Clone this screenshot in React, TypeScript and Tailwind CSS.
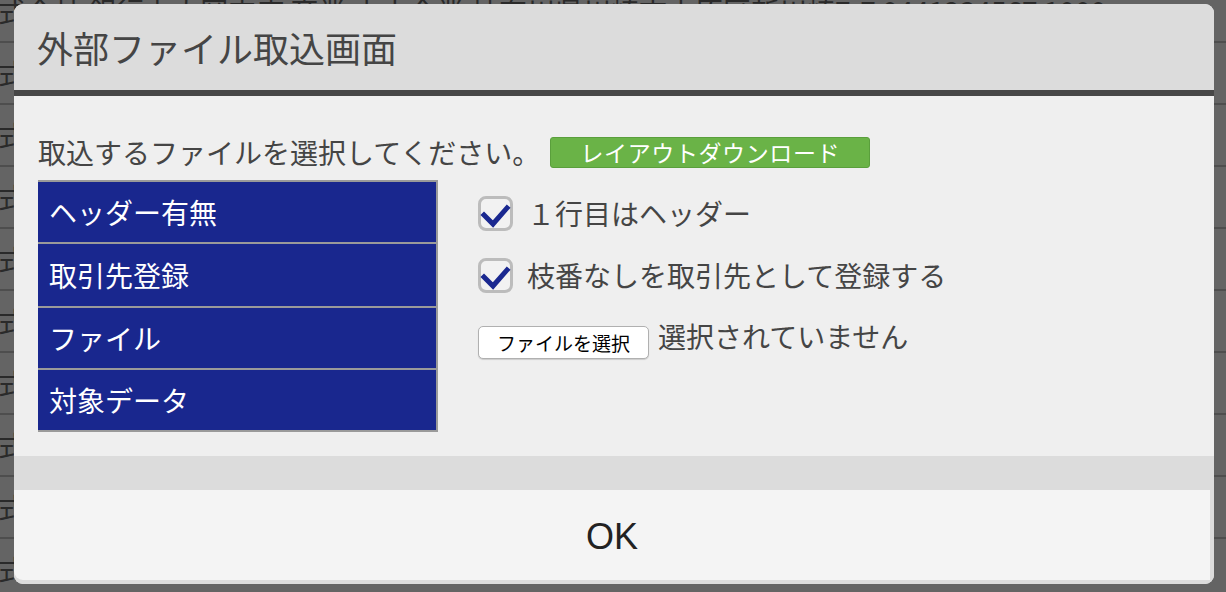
import React from "react";

const jp = { fontFamily: '"Noto Sans CJK JP", "Noto Sans", sans-serif' };

const bgRows = [
  "式会社 銀行上大岡支店 商業 中小企業 神奈川県川崎市中原区新川崎7-7 0441234567 1000",
  "式会社 ",
  "式会社 ",
  "式会社 ",
  "式会社 ",
  "式会社 ",
  "式会社 ",
  "式会社 ",
  "式会社 ",
  "式会社 ",
];

function Check() {
  return (
    <div className="w-[35px] h-[35px] shrink-0 rounded-[8px] border-[3px] border-[#bcbcbc] bg-[#f2f2f2] flex items-center justify-center">
      <svg width="35" height="35" viewBox="0 0 35 35" className="-m-[3px]">
        <polyline
          points="6,19 15,28 29,12"
          fill="none"
          stroke="#1a2890"
          strokeWidth="5"
          strokeLinecap="square"
          strokeLinejoin="miter"
        />
      </svg>
    </div>
  );
}

export default function App() {
  const rows = [
    { t: "ヘッダー有無", h: "h-[62px] border-b-2" },
    { t: "取引先登録", h: "h-[64px] border-b-2" },
    { t: "ファイル", h: "h-[62px] border-b-2" },
    { t: "対象データ", h: "h-[60px]" },
  ];
  return (
    <div className="relative w-[1226px] h-[592px] overflow-hidden bg-[#646464]" style={jp}>
      {/* faded background table */}
      <div className="-mt-[19px] flex flex-col">
        {bgRows.map((t, i) => (
          <div
            key={i}
            className="h-[62px] border-b-2 border-[#4e4e4e] flex items-center text-[28px] text-[#2a2a2a] whitespace-nowrap -ml-[2px]"
          >
            {t}
          </div>
        ))}
      </div>

      {/* modal */}
      <div className="absolute left-[14px] top-[4px] w-[1200px] h-[580px] rounded-[9px] overflow-hidden flex flex-col bg-[#efefef]">
        <div className="h-[86px] shrink-0 bg-[#dcdcdc] flex items-center pl-[23px]">
          <span className="text-[36px] leading-none text-[#454545]">外部ファイル取込画面</span>
        </div>
        <div className="h-[6px] shrink-0 bg-[#474747]" />
        <div className="h-[360px] shrink-0 bg-[#efefef] pl-[24px] pt-[40px]">
          <div className="h-[32px] flex items-center">
            <span className="text-[28px] leading-none text-[#454545]">取込するファイルを選択してください。</span>
            <div className="ml-[10px] w-[320px] h-[31px] rounded-[3px] bg-[#6ab347] border border-[#5a9f3c] flex items-center justify-center">
              <span className="text-[23px] tracking-[0.6px] leading-none text-white">レイアウトダウンロード</span>
            </div>
          </div>
          <div className="mt-[12px] flex">
            <div className="w-[400px] border-t-2 border-r-2 border-b-2 border-[#9a9a9a] bg-[#19278e] flex flex-col">
              {rows.map((r) => (
                <div
                  key={r.t}
                  className={`${r.h} border-[#9a9a9a] flex items-center pl-[11px] text-[28px] leading-none text-white`}
                >
                  {r.t}
                </div>
              ))}
            </div>
            <div className="ml-[40px] pt-[2px] flex flex-col">
              <div className="h-[62px] flex items-center">
                <Check />
                <span className="ml-[14px] text-[28px] leading-none text-[#454545]">１行目はヘッダー</span>
              </div>
              <div className="h-[62px] flex items-center">
                <Check />
                <span className="ml-[14px] text-[28px] leading-none text-[#454545]">枝番なしを取引先として登録する</span>
              </div>
              <div className="h-[64px] flex items-center">
                <div className="flex items-end">
                  <div className="w-[171px] h-[33px] mt-[8px] rounded-[5px] border border-[#b0b0b0] bg-white flex items-center justify-center shadow-[0_1px_1px_rgba(0,0,0,0.15)]">
                    <span className="text-[19px] leading-none text-black">ファイルを選択</span>
                  </div>
                  <span className="ml-[9px] mb-[9px] text-[28px] leading-none text-[#454545]">選択されていません</span>
                </div>
              </div>
            </div>
          </div>
        </div>
        <div className="h-[34px] shrink-0 bg-[#dcdcdc]" />
        <div className="flex-1 bg-[#dcdcdc]">
          <div className="h-[90px] mr-[4px] bg-[#f4f4f4] rounded-bl-[9px] flex items-center justify-center">
            <span className="text-[36px] leading-none text-[#222] mt-[4px]" style={{ fontFamily: '"Liberation Sans", Arial, sans-serif' }}>
              OK
            </span>
          </div>
        </div>
      </div>
    </div>
  );
}
